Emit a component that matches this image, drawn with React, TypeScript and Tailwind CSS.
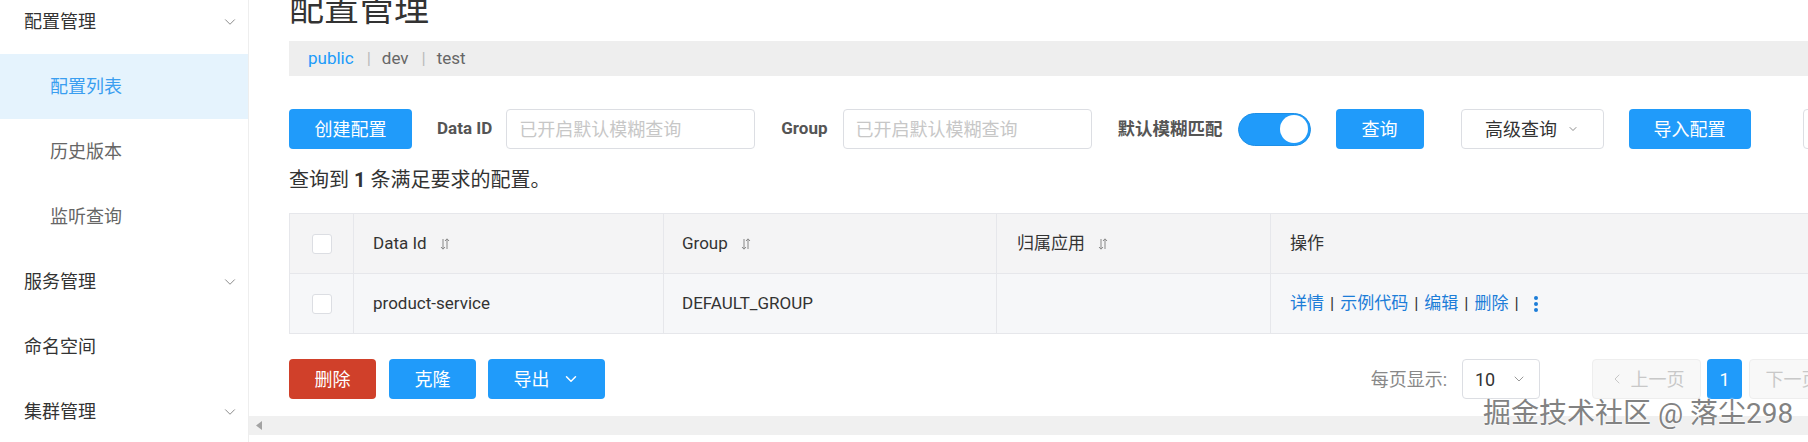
import { ChevronDown, ChevronLeft, ChevronRight } from 'lucide-react';

// ---------------------------------------------------------------------------
// Small drawings
// ---------------------------------------------------------------------------

function SortIcon() {
  return (
    <svg className="w-[12px] h-[14px] ml-[12px] text-[#888]" viewBox="0 0 12 14" fill="none" stroke="currentColor" strokeWidth="1">
      <path d="M4 2v10M2 10l2 2.2L6 10" />
      <path d="M8 12V2M6 4l2-2.2L10 4" />
    </svg>
  );
}

function Checkbox() {
  return <div className="w-[20px] h-[20px] rounded-[3px] border border-[#dcdee3] bg-white" />;
}

function SideItem({ label, sub, active, arrow }: { label: string; sub?: boolean; active?: boolean; arrow?: boolean }) {
  return (
    <div
      className={`h-[65px] flex items-center justify-between pr-[9px] text-[18px] ${
        sub ? 'pl-[50px]' : 'pl-[24px]'
      } ${active ? 'bg-[#e5f3fd] text-[#3a9ef0]' : sub ? 'text-[#666]' : 'text-[#333]'}`}>
      <span>{label}</span>
      {arrow && <ChevronDown className="w-[18px] h-[18px] text-[#888]" strokeWidth={1.3} />}
    </div>
  );
}

function BlueButton({ children, w }: { children: React.ReactNode; w: string }) {
  return (
    <button className={`${w} h-[40px] shrink-0 rounded-[4px] bg-[#209bfa] text-white text-[18px] flex items-center justify-center`}>
      {children}
    </button>
  );
}

// ---------------------------------------------------------------------------
// Page
// ---------------------------------------------------------------------------

export default function App() {
  return (
    <div className="relative w-[1808px] h-[442px] overflow-hidden flex bg-white font-['Roboto','Noto_Sans_CJK_SC',sans-serif] text-[#333]">
      {/* Sidebar */}
      <aside className="w-[249px] shrink-0 border-r border-[#eeeeee] -mt-[11px]">
        <SideItem label="配置管理" arrow />
        <SideItem label="配置列表" sub active />
        <SideItem label="历史版本" sub />
        <SideItem label="监听查询" sub />
        <SideItem label="服务管理" arrow />
        <SideItem label="命名空间" />
        <SideItem label="集群管理" arrow />
      </aside>

      {/* Main */}
      <main className="flex-1 min-w-0 flex flex-col">
        <div className="flex-1 pl-[40px] overflow-hidden">
          <div className="h-[41px] flex items-end">
            <h1 className="mb-[14px] text-[35px] leading-[34px] font-normal text-[#333]">配置管理</h1>
          </div>

          {/* Namespaces */}
          <div className="h-[35px] bg-[#eeeeee] flex items-center pl-[19px] text-[17px] text-[#666]">
            <span className="text-[#209bfa]">public</span>
            <span className="ml-[13px] mr-[11px] text-[#bbb]">|</span>
            <span>dev</span>
            <span className="ml-[13px] mr-[11px] text-[#bbb]">|</span>
            <span>test</span>
          </div>

          {/* Search bar */}
          <div className="mt-[33px] flex items-center h-[40px] w-[1600px]">
            <BlueButton w="w-[123px]">创建配置</BlueButton>
            <span className="ml-[25px] text-[17px] font-bold text-[#555]">Data ID</span>
            <input
              className="ml-[14px] w-[249px] h-[40px] border border-[#dcdee3] rounded-[4px] px-[12px] text-[18px] placeholder:text-[#c7c7c7] outline-none"
              placeholder="已开启默认模糊查询"
            />
            <span className="ml-[26px] text-[17px] font-bold text-[#555]">Group</span>
            <input
              className="ml-[15px] w-[249px] h-[40px] border border-[#dcdee3] rounded-[4px] px-[12px] text-[18px] placeholder:text-[#c7c7c7] outline-none"
              placeholder="已开启默认模糊查询"
            />
            <span className="ml-[26px] text-[17.5px] font-bold text-[#555]">默认模糊匹配</span>
            <div className="ml-[15px] w-[73px] h-[33px] rounded-full bg-[#209bfa] border border-[#1d8fe6] flex items-center justify-end pr-[2px]">
              <div className="w-[28px] h-[28px] rounded-full bg-white" />
            </div>
            <div className="ml-[25px]">
              <BlueButton w="w-[88px]">查询</BlueButton>
            </div>
            <button className="ml-[37px] w-[143px] h-[40px] shrink-0 rounded-[4px] border border-[#dcdee3] bg-white text-[18px] text-[#333] flex items-center justify-center gap-[10px]">
              高级查询
              <ChevronDown className="w-[12px] h-[12px] text-[#666]" strokeWidth={1.5} />
            </button>
            <div className="ml-[25px]">
              <BlueButton w="w-[122px]">导入配置</BlueButton>
            </div>
            <div className="ml-[52px] w-[80px] h-[40px] shrink-0 rounded-[4px] border border-[#dcdee3] bg-white" />
          </div>

          <p className="mt-[18px] text-[20px] leading-[26px] text-[#333]">
            查询到 <b className="font-bold">1</b> 条满足要求的配置。
          </p>

          {/* Table */}
          <div className="mt-[20px] w-[1600px] border border-[#e6e7eb] text-[17px]">
            <div className="flex h-[60px] bg-[#f4f4f5] border-b border-[#e6e7eb]">
              <div className="w-[64px] shrink-0 border-r border-[#e6e7eb] flex items-center justify-center">
                <Checkbox />
              </div>
              <div className="w-[310px] shrink-0 border-r border-[#e6e7eb] flex items-center pl-[19px]">
                Data Id
                <SortIcon />
              </div>
              <div className="w-[333px] shrink-0 border-r border-[#e6e7eb] flex items-center pl-[18px]">
                Group
                <SortIcon />
              </div>
              <div className="w-[274px] shrink-0 border-r border-[#e6e7eb] flex items-center pl-[20px]">
                归属应用
                <SortIcon />
              </div>
              <div className="flex-1 flex items-center pl-[19px]">操作</div>
            </div>
            <div className="flex h-[59px] bg-[#f6f7f9]">
              <div className="w-[64px] shrink-0 border-r border-[#e6e7eb] flex items-center justify-center">
                <Checkbox />
              </div>
              <div className="w-[310px] shrink-0 border-r border-[#e6e7eb] flex items-center pl-[19px]">product-service</div>
              <div className="w-[333px] shrink-0 border-r border-[#e6e7eb] flex items-center pl-[18px]">DEFAULT_GROUP</div>
              <div className="w-[274px] shrink-0 border-r border-[#e6e7eb]" />
              <div className="flex-1 flex items-center pl-[19px] text-[#1c7dd8] gap-[6px]">
                <span>详情</span>
                <span className="text-[#333]">|</span>
                <span>示例代码</span>
                <span className="text-[#333]">|</span>
                <span>编辑</span>
                <span className="text-[#333]">|</span>
                <span>删除</span>
                <span className="text-[#333]">|</span>
                <svg className="ml-[8px] w-[6px] h-[20px]" viewBox="0 0 6 20" fill="#1c7dd8">
                  <circle cx="3" cy="4" r="2" />
                  <circle cx="3" cy="10" r="2" />
                  <circle cx="3" cy="16" r="2" />
                </svg>
              </div>
            </div>
          </div>

          {/* Footer actions + pagination */}
          <div className="mt-[25px] flex items-center h-[40px] w-[1569px]">
            <button className="w-[87px] h-[40px] rounded-[4px] bg-[#d0402a] text-white text-[18px]">删除</button>
            <div className="ml-[13px]">
              <BlueButton w="w-[87px]">克隆</BlueButton>
            </div>
            <div className="ml-[12px]">
              <BlueButton w="w-[117px]">
                <span>导出</span>
                <ChevronDown className="ml-[12px] w-[18px] h-[18px]" strokeWidth={2} />
              </BlueButton>
            </div>
            <span className="ml-auto text-[18px] text-[#888]">每页显示:</span>
            <div className="ml-[15px] w-[78px] h-[40px] border border-[#dcdee3] rounded-[4px] flex items-center justify-between px-[12px] text-[18px] text-[#333]">
              10
              <ChevronDown className="w-[16px] h-[16px] text-[#999]" strokeWidth={1.5} />
            </div>
            <div className="ml-[52px] w-[109px] h-[40px] border border-[#eeeeee] bg-[#f8f8f8] rounded-[4px] flex items-center justify-center gap-[6px] text-[18px] text-[#c8c8c8]">
              <ChevronLeft className="w-[16px] h-[16px]" strokeWidth={1.5} />
              上一页
            </div>
            <div className="ml-[6px] w-[35px] h-[40px] rounded-[4px] bg-[#209bfa] text-white text-[18px] flex items-center justify-center">1</div>
            <div className="ml-[7px] w-[109px] h-[40px] border border-[#eeeeee] bg-[#f8f8f8] rounded-[4px] flex items-center justify-center gap-[6px] text-[18px] text-[#c8c8c8] shrink-0">
              下一页
              <ChevronRight className="w-[16px] h-[16px]" strokeWidth={1.5} />
            </div>
          </div>
        </div>

        {/* Horizontal scrollbar */}
        <div className="h-[19px] mb-[7px] bg-[#f0f0f0] flex items-center pl-[7px]">
          <svg className="w-[6px] h-[9px]" viewBox="0 0 6 9" fill="#a3a3a3">
            <path d="M6 0v9L0 4.5z" />
          </svg>
        </div>
      </main>

      {/* Watermark */}
      <div className="absolute left-[1483px] top-[397px] text-[28px] leading-[34px] text-[#828282] [text-shadow:0_0_2px_#fff,0_0_2px_#fff] whitespace-nowrap">
        掘金技术社区 @ 落尘298
      </div>
    </div>
  );
}
